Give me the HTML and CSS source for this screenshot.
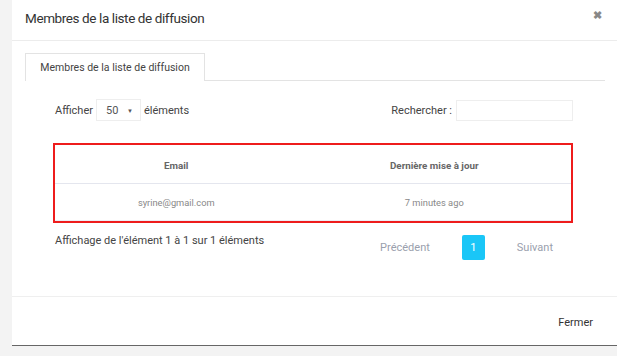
FILE: index.html
```html
<!DOCTYPE html>
<html lang="fr">
<head>
  <meta charset="UTF-8" />
  <title>Membres de la liste de diffusion</title>
  <link rel="stylesheet" href="styles.css">
</head>
<body>
  <div class="modal">
    <div class="modal-header">
      <h4 class="modal-title">Membres de la liste de diffusion</h4>
      <span class="close">&#10006;</span>
    </div>

    <div class="modal-body">
      <ul class="tabs">
        <li class="tab active">Membres de la liste de diffusion</li>
      </ul>

      <div class="tab-content">
        <div class="controls">
          <label class="length">
            Afficher
            <span class="select">50 <span class="caret">&#9660;</span></span>
            éléments
          </label>
          <label class="search">
            Rechercher :
            <span class="search-box"></span>
          </label>
        </div>

        <table class="members">
          <thead>
            <tr>
              <th class="col-email">Email</th>
              <th>Dernière mise à jour</th>
            </tr>
          </thead>
          <tbody>
            <tr>
              <td>syrine@gmail.com</td>
              <td>7 minutes ago</td>
            </tr>
          </tbody>
        </table>

        <div class="table-footer">
          <div class="info">Affichage de l'élément 1 à 1 sur 1 éléments</div>
          <div class="pagination">
            <span class="page-link">Précédent</span>
            <span class="page-num">1</span>
            <span class="page-link">Suivant</span>
          </div>
        </div>
      </div>
    </div>

    <div class="modal-footer">
      <span class="btn-close">Fermer</span>
    </div>
  </div>
</body>
</html>
```

FILE: styles.css
```css
body {
  margin: 0;
  background: #f3f3f3;
  font-family: Roboto, "Liberation Sans", sans-serif;
  color: #555;
}

.modal {
  margin-left: 12px;
  background: #fff;
  height: 345px;
  border-bottom: 1px solid #666;
  display: flex;
  flex-direction: column;
}

.modal-header {
  height: 41px;
  display: flex;
  align-items: center;
  justify-content: space-between;
  padding: 0 15px 4px 13px;
  border-bottom: 1px solid #ececec;
  box-sizing: border-box;
}

.modal-title {
  margin: 0;
  font-size: 13.5px;
  letter-spacing: -0.4px;
  font-weight: 400;
  color: #333;
}

.close {
  font-size: 11px;
  color: #888;
  font-weight: bold;
  margin-top: -6px;
}

.modal-body {
  padding: 12px 12px 0 13px;
  flex: 1;
}

.tabs {
  list-style: none;
  margin: 0;
  padding: 0;
  display: flex;
  border-bottom: 1px solid #e3e3e3;
}

.tab {
  width: 180px;
  height: 28px;
  box-sizing: border-box;
  border: 1px solid #e3e3e3;
  border-bottom: none;
  margin-bottom: -1px;
  background: #fff;
  font-size: 10.5px;
  color: #444;
  display: flex;
  align-items: center;
  justify-content: center;
}

.tab-content {
  padding: 18px 32px 0 28px;
}

.controls {
  display: flex;
  justify-content: space-between;
  align-items: center;
  font-size: 11px;
  color: #444;
  height: 22px;
}

.length {
  padding-left: 2px;
  display: flex;
  align-items: center;
  gap: 3px;
}

.select {
  width: 45px;
  height: 22px;
  box-sizing: border-box;
  border: 1px solid #eee;
  display: flex;
  align-items: center;
  justify-content: space-between;
  padding: 0 7px 0 9px;
  color: #555;
}

.caret {
  font-size: 6px;
  color: #555;
}

.search {
  display: flex;
  align-items: center;
  gap: 4px;
}

.search-box {
  width: 117px;
  height: 21px;
  box-sizing: border-box;
  border: 1px solid #eee;
}

.members {
  margin-top: 22px;
  width: 100%;
  border: 2px solid #ee1c1c;
  border-collapse: separate;
  border-spacing: 0;
  font-size: 9.3px;
}

.members th {
  height: 36px;
  font-size: 9.8px;
  font-weight: 700;
  color: #666;
  border-bottom: 1px solid #e4e6ee;
  text-align: center;
  padding: 2px 0 0;
}

.members th.col-email {
  width: 47%;
}

.members td {
  height: 35px;
  padding: 0;
  color: #888;
  text-align: center;
  border-bottom: 1px solid #eceef5;
}

.members tbody tr {
  height: 37px;
}

.table-footer {
  display: flex;
  justify-content: space-between;
  padding: 11px 0 0 2px;
}

.info {
  font-size: 11px;
  color: #444;
}

.pagination {
  display: flex;
  align-items: center;
  margin-top: 1px;
  padding-right: 20px;
}

.page-link {
  font-size: 11px;
  color: #9aa0ad;
  padding: 0 32px;
}

.page-link:last-child {
  padding-right: 0;
}

.page-num {
  width: 23px;
  height: 25px;
  background: #1ac6f7;
  color: #fff;
  border-radius: 2px;
  font-size: 11px;
  display: flex;
  align-items: center;
  justify-content: center;
}

.modal-footer {
  height: 48px;
  border-top: 1px solid #efefef;
  display: flex;
  align-items: center;
  justify-content: flex-end;
  padding-right: 24px;
}

.btn-close {
  font-size: 11px;
  color: #333;
  margin-top: 2px;
}
```
